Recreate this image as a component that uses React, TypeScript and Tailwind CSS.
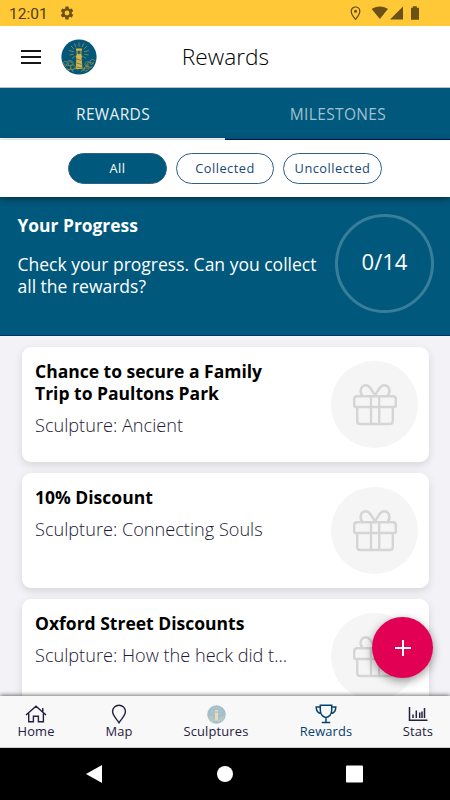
import { ReactNode } from 'react'
import clsx from 'clsx'

type Reward = {
  title: string
  sculpture: string
}

const FILTERS = ['All', 'Collected', 'Uncollected']

const REWARDS: Reward[] = [
  { title: 'Chance to secure a Family Trip to Paultons Park', sculpture: 'Ancient' },
  { title: '10% Discount', sculpture: 'Connecting Souls' },
  { title: 'Oxford Street Discounts', sculpture: 'How the heck did t...' },
]

// Icons

function GearIcon() {
  return (
    <svg viewBox="0 0 24 24" className="size-4" fill="#6b5114">
      <path d="M19.14 12.94c.04-.3.06-.61.06-.94s-.02-.64-.07-.94l2.03-1.58a.49.49 0 0 0 .12-.61l-1.92-3.32a.49.49 0 0 0-.59-.22l-2.39.96c-.5-.38-1.03-.7-1.62-.94L14.4 2.81a.48.48 0 0 0-.48-.41h-3.84a.47.47 0 0 0-.47.41l-.36 2.54c-.59.24-1.13.57-1.62.94l-2.39-.96a.48.48 0 0 0-.59.22L2.74 8.87a.47.47 0 0 0 .12.61l2.03 1.58c-.05.3-.09.63-.09.94s.02.64.07.94l-2.03 1.58a.49.49 0 0 0-.12.61l1.92 3.32c.12.22.37.29.59.22l2.39-.96c.5.38 1.03.7 1.62.94l.36 2.54c.05.24.24.41.48.41h3.84c.24 0 .44-.17.47-.41l.36-2.54c.59-.24 1.13-.56 1.62-.94l2.39.96c.22.08.47 0 .59-.22l1.92-3.32a.47.47 0 0 0-.12-.61zM12 15.6A3.6 3.6 0 1 1 12 8.4a3.6 3.6 0 0 1 0 7.2z" />
    </svg>
  )
}

function LogoIcon({ className }: { className: string }) {
  return (
    <svg viewBox="0 0 36 36" className={className}>
      <circle cx="18" cy="18" r="17.6" fill="#045778" />
      <g stroke="#a99a4c" strokeWidth=".7" fill="none">
        <path d="M18 3.5v4M13.5 4.5l1.4 3.6M22.5 4.5l-1.4 3.6M10 7l3 3M26 7l-3 3M8 11.5l5 1.3M28 11.5l-5 1.3M8.5 16l4-.8M27.5 16l-4-.8M11 19.5l2.5-2M25 19.5l-2.5-2" />
      </g>
      <path d="M15 9.5h6v2h-.6v5h.8v2h-.7L21.500 30h-6.800l.8-11.5h-.7v-2h.8v-5H15z" fill="#d9b443" />
      <path d="M16.800 12h2.400v2.800h-2.400zM16 20l4 1.5M15.8 24l4.8 1.5M15.300 28l5.600 1" fill="#045778" stroke="#52734f" strokeWidth=".8" />
      <g stroke="#92914a" strokeWidth=".8" fill="none">
        <path d="M2 24c2-3 5-1 4 1s-4 1-3-1M6 23c2-3 7-1 6 2s-5 2-5 0 3-3 4-1M4 28c2-3 6-2 6 1s-5 2-4 0M9 27c3-3 6 0 5 2s-5 2-4 0M11 32c1-3 5-3 6-1M7 31c3-2 5 0 5 2" />
        <path d="M34 22c-2-3-6-1-5 2s4 1 3-1M32 25c-3-3-7-1-6 2s5 2 5 0M28 23c-2-1-5 1-4 3s4 1 3-1M30 29c-2-3-7-2-7 1s5 2 4 0M22 32c1-3 4-4 6-2M20 33l4-5" />
      </g>
    </svg>
  )
}

function GiftIcon() {
  return (
    <svg viewBox="0 0 44 42" className="h-[42px] w-11" fill="none" stroke="#d5d5d5" strokeWidth="2.4" strokeLinejoin="round">
      <path d="M4.2 12.2h35.600q3 0 3 3V21.500q0 1.500-1.500 1.500H2.700Q1.200 23 1.200 21.500V15.200q0-3 3-3z" />
      <path d="M4.200 23v14q0 3 3 3h29.600q3 0 3-3V23M18 12.200V40M26.200 12.200V40" />
      <path d="M9.500 12C6 8 7.500 1.300 13 1.300c3.500 0 5.500 3.800 9 10.200 3.500-6.400 5.500-10.200 9-10.200 5.500 0 7 6.700 3.500 10.700" />
    </svg>
  )
}

function HomeIcon() {
  return (
    <svg viewBox="0 0 22 18" className="h-[18px] w-[22px]" fill="none" stroke="currentColor" strokeWidth="1.4">
      <path d="M1 10 11 1.200 21 10M17.800 7V3M3.700 8.200v8.600h4.700v-5.500h5v5.500h5V8.200" />
    </svg>
  )
}

function MapIcon() {
  return (
    <svg viewBox="0 0 16 20" className="h-5 w-4" fill="none" stroke="currentColor" strokeWidth="1.400">
      <path d="M8 1.200a6.400 6.400 0 0 0-6.400 6.400C1.600 11.500 5.500 15 8 18.800c2.500-3.800 6.400-7.300 6.400-11.200A6.400 6.400 0 0 0 8 1.200z" />
    </svg>
  )
}

function TrophyIcon() {
  return (
    <svg viewBox="0 0 22 20" className="h-5 w-[22px]" fill="none" stroke="currentColor" strokeWidth="1.500">
      <path d="M5.300 1.200h11.400v5c0 4-2.500 7.200-5.700 7.200S5.300 10.200 5.300 6.200zM5.300 3H1.200c0 4 1.800 6.400 5.300 6.400M16.700 3h4.100c0 4-1.800 6.400-5.300 6.400M11 13.400v5.100M6.800 18.600h8.400" />
    </svg>
  )
}

function StatsIcon() {
  return (
    <svg viewBox="0 0 20 16" className="h-4 w-5" fill="none" stroke="currentColor" strokeWidth="1.500">
      <path d="M1.500 1v13.300H19.500M5 8.500v3.500M8.300 4.500V12M11.700 6.500V12M14 5.500V12M16.500 2V12" />
    </svg>
  )
}

// Sections

function StatusBar() {
  return (
    <div className="flex h-[26px] items-center bg-[#ffc837] pr-[28px] pl-[9px] text-[#6b5114]">
      <span className="w-[50px] pt-[3px] font-[Roboto] text-[15.500px] text-[#4e3d15]">12:01</span>
      <GearIcon />
      <svg viewBox="0 0 72 16" className="ml-auto h-4 w-[72px]" fill="#6b5114">
        <path d="M5.500 2a4.300 4.300 0 0 0-4.300 4.300c0 3.200 4.300 8 4.300 8s4.300-4.800 4.300-8A4.300 4.300 0 0 0 5.500 2z" fill="none" stroke="#5f4916" strokeWidth="1.200" />
        <circle cx="5.500" cy="6.300" r="1.500" />
        <path d="M21.700 4c4-3.500 12.200-3.500 16.200 0l-8.100 10z" />
        <path d="M40 14.500 53 1.500v13z" />
        <path d="M61 2.800h1.800V1.300h4v1.500h2.200v12H61z" />
      </svg>
    </div>
  )
}

function RewardCard({ title, sculpture }: Reward) {
  return (
    <div className="flex h-[115px] shrink-0 justify-between rounded-[9px] bg-white pt-[14px] pr-[11px] pl-[13px] shadow-[0_3px_9px_rgba(0,0,0,0.12)]">
      <div className="-mt-px w-[258px]">
        <h3 className="w-[250px] text-[17.500px] leading-[22px] font-bold text-black">{title}</h3>
        <p className="mt-[10px] text-[18.150px] leading-[22px] font-light whitespace-nowrap text-[#1d1936]">Sculpture: {sculpture}</p>
      </div>
      <div className="flex size-[87px] items-center justify-center rounded-full bg-[#f5f5f5]">
        <GiftIcon />
      </div>
    </div>
  )
}

function NavItem({ label, icon, active, className }: { label: string; icon: ReactNode; active?: boolean; className: string }) {
  return (
    <button className={clsx('flex flex-col items-center', active ? 'text-[#04426f]' : 'text-[#25203f]', className)}>
      <span className="flex h-5 items-center">{icon}</span>
      <span className="-mt-px text-[12.900px] leading-[16px] tracking-[0.150px]">{label}</span>
    </button>
  )
}

export default function App() {
  return (
    <div className="relative flex h-[800px] w-[450px] flex-col overflow-hidden bg-[#f3f2f7] font-['Open_Sans',sans-serif]">
      <StatusBar />

      <header className="grid h-[62px] shrink-0 grid-cols-[1fr_auto_1fr] items-center border-b border-[#bfc0cc] bg-white">
        <div className="flex items-center pl-[21px]">
          <div className="mr-5 flex w-5 flex-col gap-1">
            <span className="h-[2px] bg-[#171717]" />
            <span className="h-[2px] bg-[#171717]" />
            <span className="h-[2px] bg-[#171717]" />
          </div>
          <LogoIcon className="size-9" />
        </div>
        <h1 className="pt-[2px] pl-px text-[22.700px] font-light text-black">Rewards</h1>
      </header>

      <div className="grid h-[52px] shrink-0 grid-cols-2 bg-[#00587c] text-[15.500px] tracking-[0.350px]">
        <button className="border-b-2 border-white pt-[3px] pl-px text-[#e8eff4]">REWARDS</button>
        <button className="border-b border-[#00175c] pt-[2px] pl-px text-[#a0c1cf]">MILESTONES</button>
      </div>

      <div className="z-10 flex h-[57px] shrink-0 justify-center gap-[9px] bg-white pt-[13px] shadow-[0_2px_7px_rgba(0,0,0,0.45)]">
        {FILTERS.map((filter) => (
          <button
            key={filter}
            className={clsx(
              'h-[31px] w-[98.500px] rounded-full border border-[#315f86] text-[12.800px] tracking-[0.500px]',
              filter === 'All' ? 'bg-[#00587c] text-white' : 'text-[#164775]',
            )}
          >
            {filter}
          </button>
        ))}
      </div>

      <section className="flex h-[139px] shrink-0 justify-between border-b border-[#00316e] bg-[#00587c] pt-[17px] pr-4 pl-[17.500px] text-white">
        <div className="w-[306px]">
          <h2 className="text-[17.400px] leading-[22px] font-bold">Your Progress</h2>
          <p className="mt-[17px] text-[17.500px] leading-[22px]">Check your progress. Can you collect all the rewards?</p>
        </div>
        <div className="flex size-[99px] items-center justify-center rounded-full border-3 border-[#387e9a] pb-1 text-[22px]">0/14</div>
      </section>

      <main className="flex min-h-0 flex-1 flex-col gap-[11px] overflow-hidden pt-[11px] pr-[21px] pl-[22px]">
        {REWARDS.map((reward) => (
          <RewardCard key={reward.title} {...reward} />
        ))}
      </main>

      <button className="absolute top-[617px] left-[372px] flex size-[61px] items-center justify-center rounded-full bg-[#e20055] shadow-[0_3px_10px_rgba(0,0,0,0.4)]">
        <svg viewBox="0 0 16 16" className="size-4" stroke="white" strokeWidth="2">
          <path d="M8 0v16M0 8h16" />
        </svg>
      </button>

      <nav className="z-10 flex h-[52px] shrink-0 border-b border-[#cfcfcf] bg-[#f8f8f8] pt-2 shadow-[0_-1px_4px_rgba(0,0,0,0.55)]">
        <NavItem className="w-[72px]" label="Home" icon={<HomeIcon />} />
        <NavItem className="w-[94px]" label="Map" icon={<MapIcon />} />
        <NavItem className="w-[100px]" label="Sculptures" icon={<LogoIcon className="size-[19px] opacity-35" />} />
        <NavItem className="w-[120px]" label="Rewards" icon={<TrophyIcon />} active />
        <NavItem className="w-16" label="Stats" icon={<StatsIcon />} />
      </nav>

      <div className="flex h-[52px] shrink-0 items-center bg-black">
        <svg viewBox="0 0 450 52" className="h-[52px] w-[450px]" fill="white">
          <path d="M102 17v18L86 26z" />
          <circle cx="225" cy="26" r="8" />
          <rect x="346" y="17.500" width="17" height="17" rx="1" />
        </svg>
      </div>
    </div>
  )
}
